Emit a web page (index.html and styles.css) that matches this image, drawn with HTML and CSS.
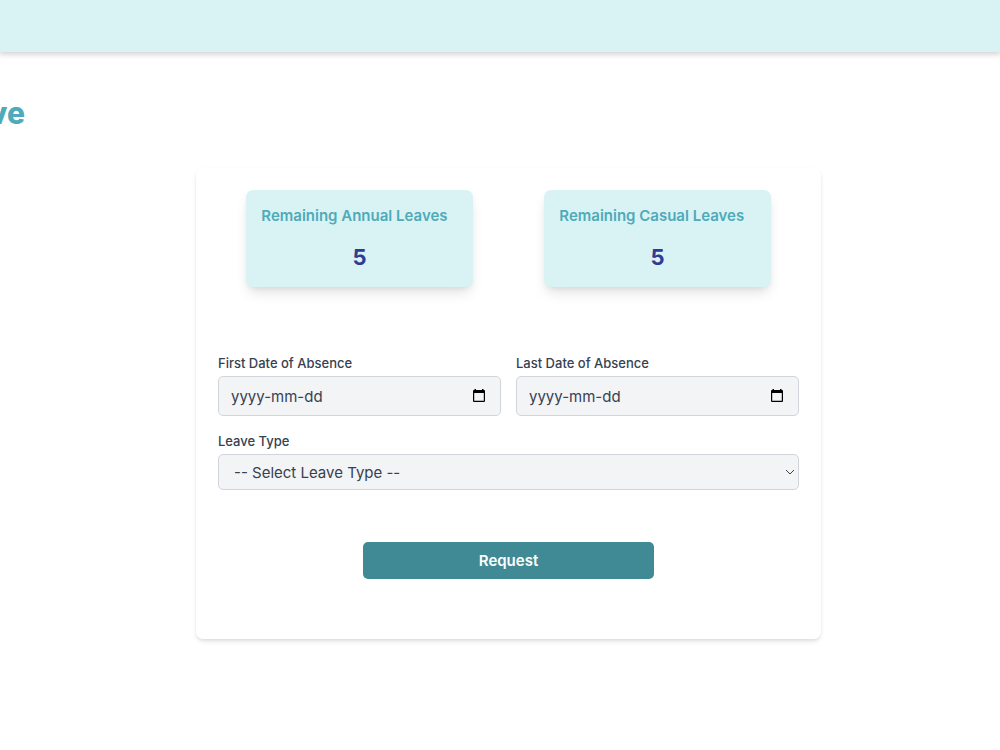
FILE: index.html
```html
<!DOCTYPE html>
<html lang="en">
<head>
    <meta charset="UTF-8">
    <meta name="viewport" content="width=device-width, initial-scale=1.0">
    <title>Leave</title>
    <link rel="stylesheet" href="styles.css">
</head>
<body>
<header class="navbar"></header>

<div class="page-title">
    <h1>Leave</h1>
</div>

<main class="content">
    <form class="leave-form">
        <div class="row">
            <div class="balance">
                <h2>Remaining Annual Leaves</h2>
                <p>5</p>
            </div>
            <div class="balance">
                <h2>Remaining Casual Leaves</h2>
                <p>5</p>
            </div>
        </div>

        <div class="row fields">
            <div class="form-group">
                <label for="firstDate">First Date of Absence</label>
                <div class="date-box">
                    <input type="text" id="firstDate" name="firstDate" placeholder="yyyy-mm-dd">
                    <button type="button" class="picker" aria-label="Pick first date">
                        <svg viewBox="0 0 14 14" width="14" height="14"><path fill="#000" fill-rule="evenodd" d="M2.500 1V0h1.500v1h6V0h1.500v1H12q1 0 1 1v10q0 1-1 1H2q-1 0-1-1V2q0-1 1-1zM2.200 4v7.800h9.600V4z"/></svg>
                    </button>
                </div>
            </div>
            <div class="form-group">
                <label for="lastDate">Last Date of Absence</label>
                <div class="date-box">
                    <input type="text" id="lastDate" name="lastDate" placeholder="yyyy-mm-dd">
                    <button type="button" class="picker" aria-label="Pick last date">
                        <svg viewBox="0 0 14 14" width="14" height="14"><path fill="#000" fill-rule="evenodd" d="M2.500 1V0h1.500v1h6V0h1.500v1H12q1 0 1 1v10q0 1-1 1H2q-1 0-1-1V2q0-1 1-1zM2.200 4v7.800h9.600V4z"/></svg>
                    </button>
                </div>
            </div>
        </div>

        <div class="form-group">
            <label for="leaveType">Leave Type</label>
            <div class="select-box">
                <select id="leaveType" name="leaveType">
                    <option value="">-- Select Leave Type --</option>
                </select>
                <svg class="chevron" viewBox="0 0 10 6" width="10" height="6"><path fill="none" stroke="#374151" d="M1 1l4 4 4-4"/></svg>
            </div>
        </div>

        <button type="submit" class="submit">Request</button>
    </form>
</main>
</body>
</html>
```

FILE: styles.css
```css
* {
    box-sizing: border-box;
}
body {
    margin: 0;
    background-color: #fff;
    color: #374151;
    font-family: Inter, "Liberation Sans", sans-serif;
    font-size: 15px;
    overflow-x: hidden;
}
h1, h2, p {
    margin: 0;
}
.navbar {
    height: 52px;
    background-color: #d9f3f4;
    box-shadow: 0 1px 6px 1px rgba(0,0,0,0.2);
}
/* title hangs off the left edge of the page */
.page-title {
    display: flex;
    justify-content: flex-end;
    width: 25px;
    margin-top: 44px;
}
.page-title h1 {
    color: #4faab9;
    font-size: 30px;
    font-weight: 800;
    line-height: 34px;
}
.content {
    padding: 38px 0 38px 17px;
}
.leave-form {
    width: 625px;
    max-width: 100%;
    margin: 0 auto;
    padding: 22px 22px 60px;
    border-radius: 7px;
    box-shadow: 0 3px 5px -1px rgba(0,0,0,0.13), 0 1px 3px rgba(0,0,0,0.04);
}
.row {
    display: grid;
    grid-template-columns: repeat(2, minmax(0, 1fr));
    gap: 15px;
}
.balance {
    width: 80%;
    margin: 0 auto;
    padding: 15px;
    border-radius: 7px;
    background-color: #d9f3f4;
    box-shadow: 0 8px 14px -3px rgba(0,0,0,0.12), 0 3px 6px -2px rgba(0,0,0,0.08);
}
.balance h2 {
    color: #4faab9;
    font-size: 15px;
    font-weight: 600;
    line-height: 22px;
    white-space: nowrap;
}
.balance p {
    margin-top: 15px;
    color: #303c94;
    font-size: 22px;
    font-weight: bold;
    line-height: 30px;
    text-align: center;
}
.fields {
    margin: 66px 0 15px;
}
label {
    display: block;
    margin-bottom: 3px;
    font-size: 13px;
    font-weight: 500;
    line-height: 20px;
}
.date-box, .select-box {
    display: flex;
    align-items: center;
    border: 1px solid #d1d5db;
    border-radius: 5px;
    background-color: #f3f4f6;
}
.date-box {
    height: 40px;
    padding: 0 12px;
}
.date-box input {
    flex: 1;
    min-width: 0;
    padding: 0;
    border: none;
    background: none;
    color: #374151;
    font: inherit;
}
.date-box input::placeholder {
    color: #374151;
}
.picker {
    display: flex;
    padding: 0 2px;
    border: none;
    background: none;
    cursor: pointer;
}
.select-box {
    height: 36px;
    padding-right: 3px;
}
.select-box select {
    flex: 1;
    height: 100%;
    padding: 0 15px;
    border: none;
    background: none;
    color: #374151;
    font: inherit;
    appearance: none;
}
.chevron {
    pointer-events: none;
}
.submit {
    display: block;
    width: 50%;
    height: 37px;
    margin: 52px auto 0;
    border: none;
    border-radius: 5px;
    background-color: #3f8a94;
    color: #fff;
    font: inherit;
    font-weight: 600;
    cursor: pointer;
}
.submit:hover {
    background-color: #37787f;
}
```
